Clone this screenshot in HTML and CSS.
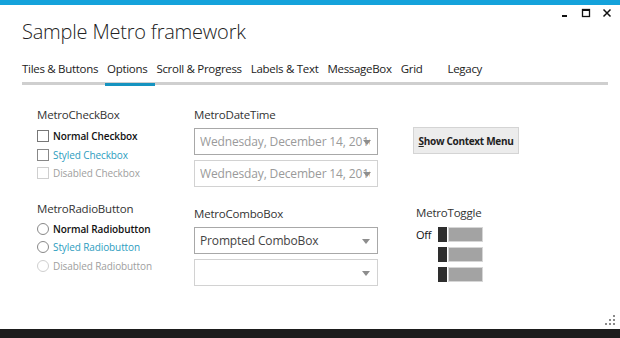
FILE: index.html
```html
<!DOCTYPE html>
<html>
<head>
<meta charset="utf-8">
<link rel="stylesheet" href="styles.css">
</head>
<body>
<div class="window">
  <div class="accent"></div>
  <div class="controls">
    <svg class="ctl" width="10" height="10" viewBox="0 0 10 10"><rect x="2" y="7" width="5" height="2" fill="#111"/></svg>
    <svg class="ctl" width="10" height="10" viewBox="0 0 10 10"><rect x="1.5" y="1.5" width="7" height="7" fill="none" stroke="#111" stroke-width="1.3"/><rect x="1" y="1" width="8" height="2" fill="#111"/></svg>
    <svg class="ctl" width="10" height="10" viewBox="0 0 10 10"><path d="M1.5 1.5 L8.5 8.5 M8.5 1.5 L1.5 8.5" stroke="#111" stroke-width="1.5"/></svg>
  </div>
  <h1 class="title">Sample Metro framework</h1>
  <nav class="tabs">
    <span class="tab">Tiles &amp; Buttons</span>
    <span class="tab active">Options</span>
    <span class="tab">Scroll &amp; Progress</span>
    <span class="tab">Labels &amp; Text</span>
    <span class="tab">MessageBox</span>
    <span class="tab">Grid</span>
    <span class="tab legacy">Legacy</span>
  </nav>
  <main class="content">
    <section class="col col1">
      <div class="group">
        <div class="glabel">MetroCheckBox</div>
        <label class="opt"><span class="box"></span><span class="otext">Normal Checkbox</span></label>
        <label class="opt styled"><span class="box"></span><span class="otext">Styled Checkbox</span></label>
        <label class="opt disabled"><span class="box"></span><span class="otext">Disabled Checkbox</span></label>
      </div>
      <div class="group group2">
        <div class="glabel">MetroRadioButton</div>
        <label class="opt"><span class="box round"></span><span class="otext">Normal Radiobutton</span></label>
        <label class="opt styled"><span class="box round"></span><span class="otext">Styled Radiobutton</span></label>
        <label class="opt disabled"><span class="box round"></span><span class="otext">Disabled Radiobutton</span></label>
      </div>
    </section>
    <section class="col col2">
      <div class="group">
        <div class="glabel">MetroDateTime</div>
        <div class="field dark"><span class="ftext muted">Wednesday, December 14, 2016</span><span class="arrow"></span></div>
        <div class="field"><span class="ftext muted">Wednesday, December 14, 2016</span><span class="arrow"></span></div>
      </div>
      <div class="group group2b">
        <div class="glabel">MetroComboBox</div>
        <div class="field dark"><span class="ftext">Prompted ComboBox</span><span class="arrow far"></span></div>
        <div class="field"><span class="ftext"></span><span class="arrow far"></span></div>
      </div>
    </section>
    <section class="col col3">
      <button class="btn"><u>S</u>how Context Menu</button>
      <div class="toggles">
        <div class="glabel tlabel">MetroToggle</div>
        <div class="trow"><span class="tstate">Off</span><span class="toggle"><span class="knob"></span><span class="track"></span></span></div>
        <div class="trow"><span class="tstate"></span><span class="toggle"><span class="knob"></span><span class="track"></span></span></div>
        <div class="trow"><span class="tstate"></span><span class="toggle"><span class="knob"></span><span class="track"></span></span></div>
      </div>
    </section>
  </main>
  <div class="grip">
    <svg width="12" height="12" viewBox="0 0 12 12" fill="#8a8a8a">
      <rect x="9" y="1" width="2" height="2"/>
      <rect x="5" y="5" width="2" height="2"/><rect x="9" y="5" width="2" height="2"/>
      <rect x="1" y="9" width="2" height="2"/><rect x="5" y="9" width="2" height="2"/><rect x="9" y="9" width="2" height="2"/>
    </svg>
  </div>
  <div class="taskbar"></div>
</div>
</body>
</html>
```

FILE: styles.css
```css
* { box-sizing: border-box; }
html, body { margin: 0; padding: 0; }
body {
  width: 620px;
  height: 338px;
  overflow: hidden;
  background: #fff;
  font-family: "Open Sans", "Noto Sans", sans-serif;
  color: #222;
}
.window {
  position: relative;
  width: 620px;
  height: 338px;
  display: flex;
  flex-direction: column;
}
.accent {
  height: 5px;
  background: #14a2db;
  flex: none;
}
.controls {
  position: absolute;
  top: 8px;
  right: 8px;
  display: flex;
  gap: 11px;
}
.ctl { display: block; }
.title {
  margin: 13px 0 0 22px;
  font-size: 20px;
  font-weight: 300;
  line-height: 28px;
  color: #222;
  letter-spacing: -0.2px;
}
.tabs {
  margin: 13px 12px 0 22px;
  display: flex;
  border-bottom: 3px solid #cfcfcf;
  height: 26px;
  align-items: flex-start;
}
.tab {
  font-size: 11.5px;
  line-height: 16px;
  padding: 2px 0 5px 0;
  margin-right: 9px;
  color: #222;
  letter-spacing: -0.3px;
  position: relative;
}
.tab.active::after {
  content: "";
  position: absolute;
  left: -2px;
  right: -8px;
  bottom: -4px;
  height: 3px;
  background: #1593c0;
}
.tab.legacy { margin-left: 16px; }
.content {
  display: flex;
  padding: 23px 0 0 37px;
}
.col1 { width: 157px; }
.col2 { width: 219px; }
.glabel {
  font-size: 11.5px;
  line-height: 14px;
  color: #333;
  letter-spacing: -0.2px;
}
.opt {
  display: flex;
  align-items: center;
  height: 18.5px;
  font-size: 10px;
  font-weight: 600;
  color: #111;
  letter-spacing: -0.1px;
}
.group .glabel + .opt { margin-top: 5px; }
.box {
  width: 12px;
  height: 12px;
  border: 1px solid #777;
  margin-right: 4px;
  flex: none;
}
.box.round { border-radius: 50%; border-color: #888; }
.opt.styled { color: #2d9dc0; font-weight: 400; }
.opt.styled .box { border-color: #888; }
.opt.disabled { color: #a0a0a0; font-weight: 400; }
.opt.disabled .box { border-color: #cfcfcf; }
.group2 { margin-top: 19px; }
.group2 .glabel + .opt { margin-top: 4px; }
.field {
  position: relative;
  width: 184px;
  height: 27px;
  border: 1px solid #d2d2d2;
  display: flex;
  align-items: center;
  padding-left: 5px;
  overflow: hidden;
}
.group .glabel + .field { margin-top: 6px; }
.field + .field { margin-top: 5px; }
.field.dark { border-color: #a8a8a8; }
.ftext {
  font-size: 12px;
  color: #444;
  white-space: nowrap;
  overflow: hidden;
  width: 170px;
  letter-spacing: -0.15px;
}
.ftext.muted { color: #9a9a9a; }
.arrow {
  position: absolute;
  right: 6px;
  top: 11px;
  width: 0;
  height: 0;
  border-left: 4px solid transparent;
  border-right: 4px solid transparent;
  border-top: 5px solid #8d8d8d;
}
.arrow.far { right: 7px; }
.group2b { margin-top: 20px; }
.btn {
  display: block;
  width: 106px;
  height: 27px;
  margin-top: 19px;
  background: #ececec;
  border: 1px solid #d4d4d4;
  font-family: "Open Sans", "Noto Sans", sans-serif;
  font-size: 10px;
  font-weight: 700;
  color: #222;
  padding: 0;
  letter-spacing: -0.3px;
}
.toggles { margin-top: 52px; margin-left: 3px; }
.tlabel { margin-bottom: 7px; }
.trow {
  display: flex;
  align-items: center;
  height: 15px;
  margin-bottom: 5px;
}
.tstate {
  width: 22px;
  font-size: 11px;
  color: #111;
  letter-spacing: -0.2px;
}
.toggle {
  display: flex;
  width: 45px;
  height: 15px;
}
.knob {
  width: 9px;
  background: #2e2e2e;
}
.track {
  flex: 1;
  margin-left: 1px;
  background: #a3a3a3;
  border: 1px solid #d6d6d6;
}
.grip {
  position: absolute;
  right: 4px;
  bottom: 12px;
}
.grip svg { display: block; }
.taskbar {
  position: absolute;
  left: 0;
  right: 0;
  bottom: 0;
  height: 9px;
  background: #1d1d1d;
}
```
